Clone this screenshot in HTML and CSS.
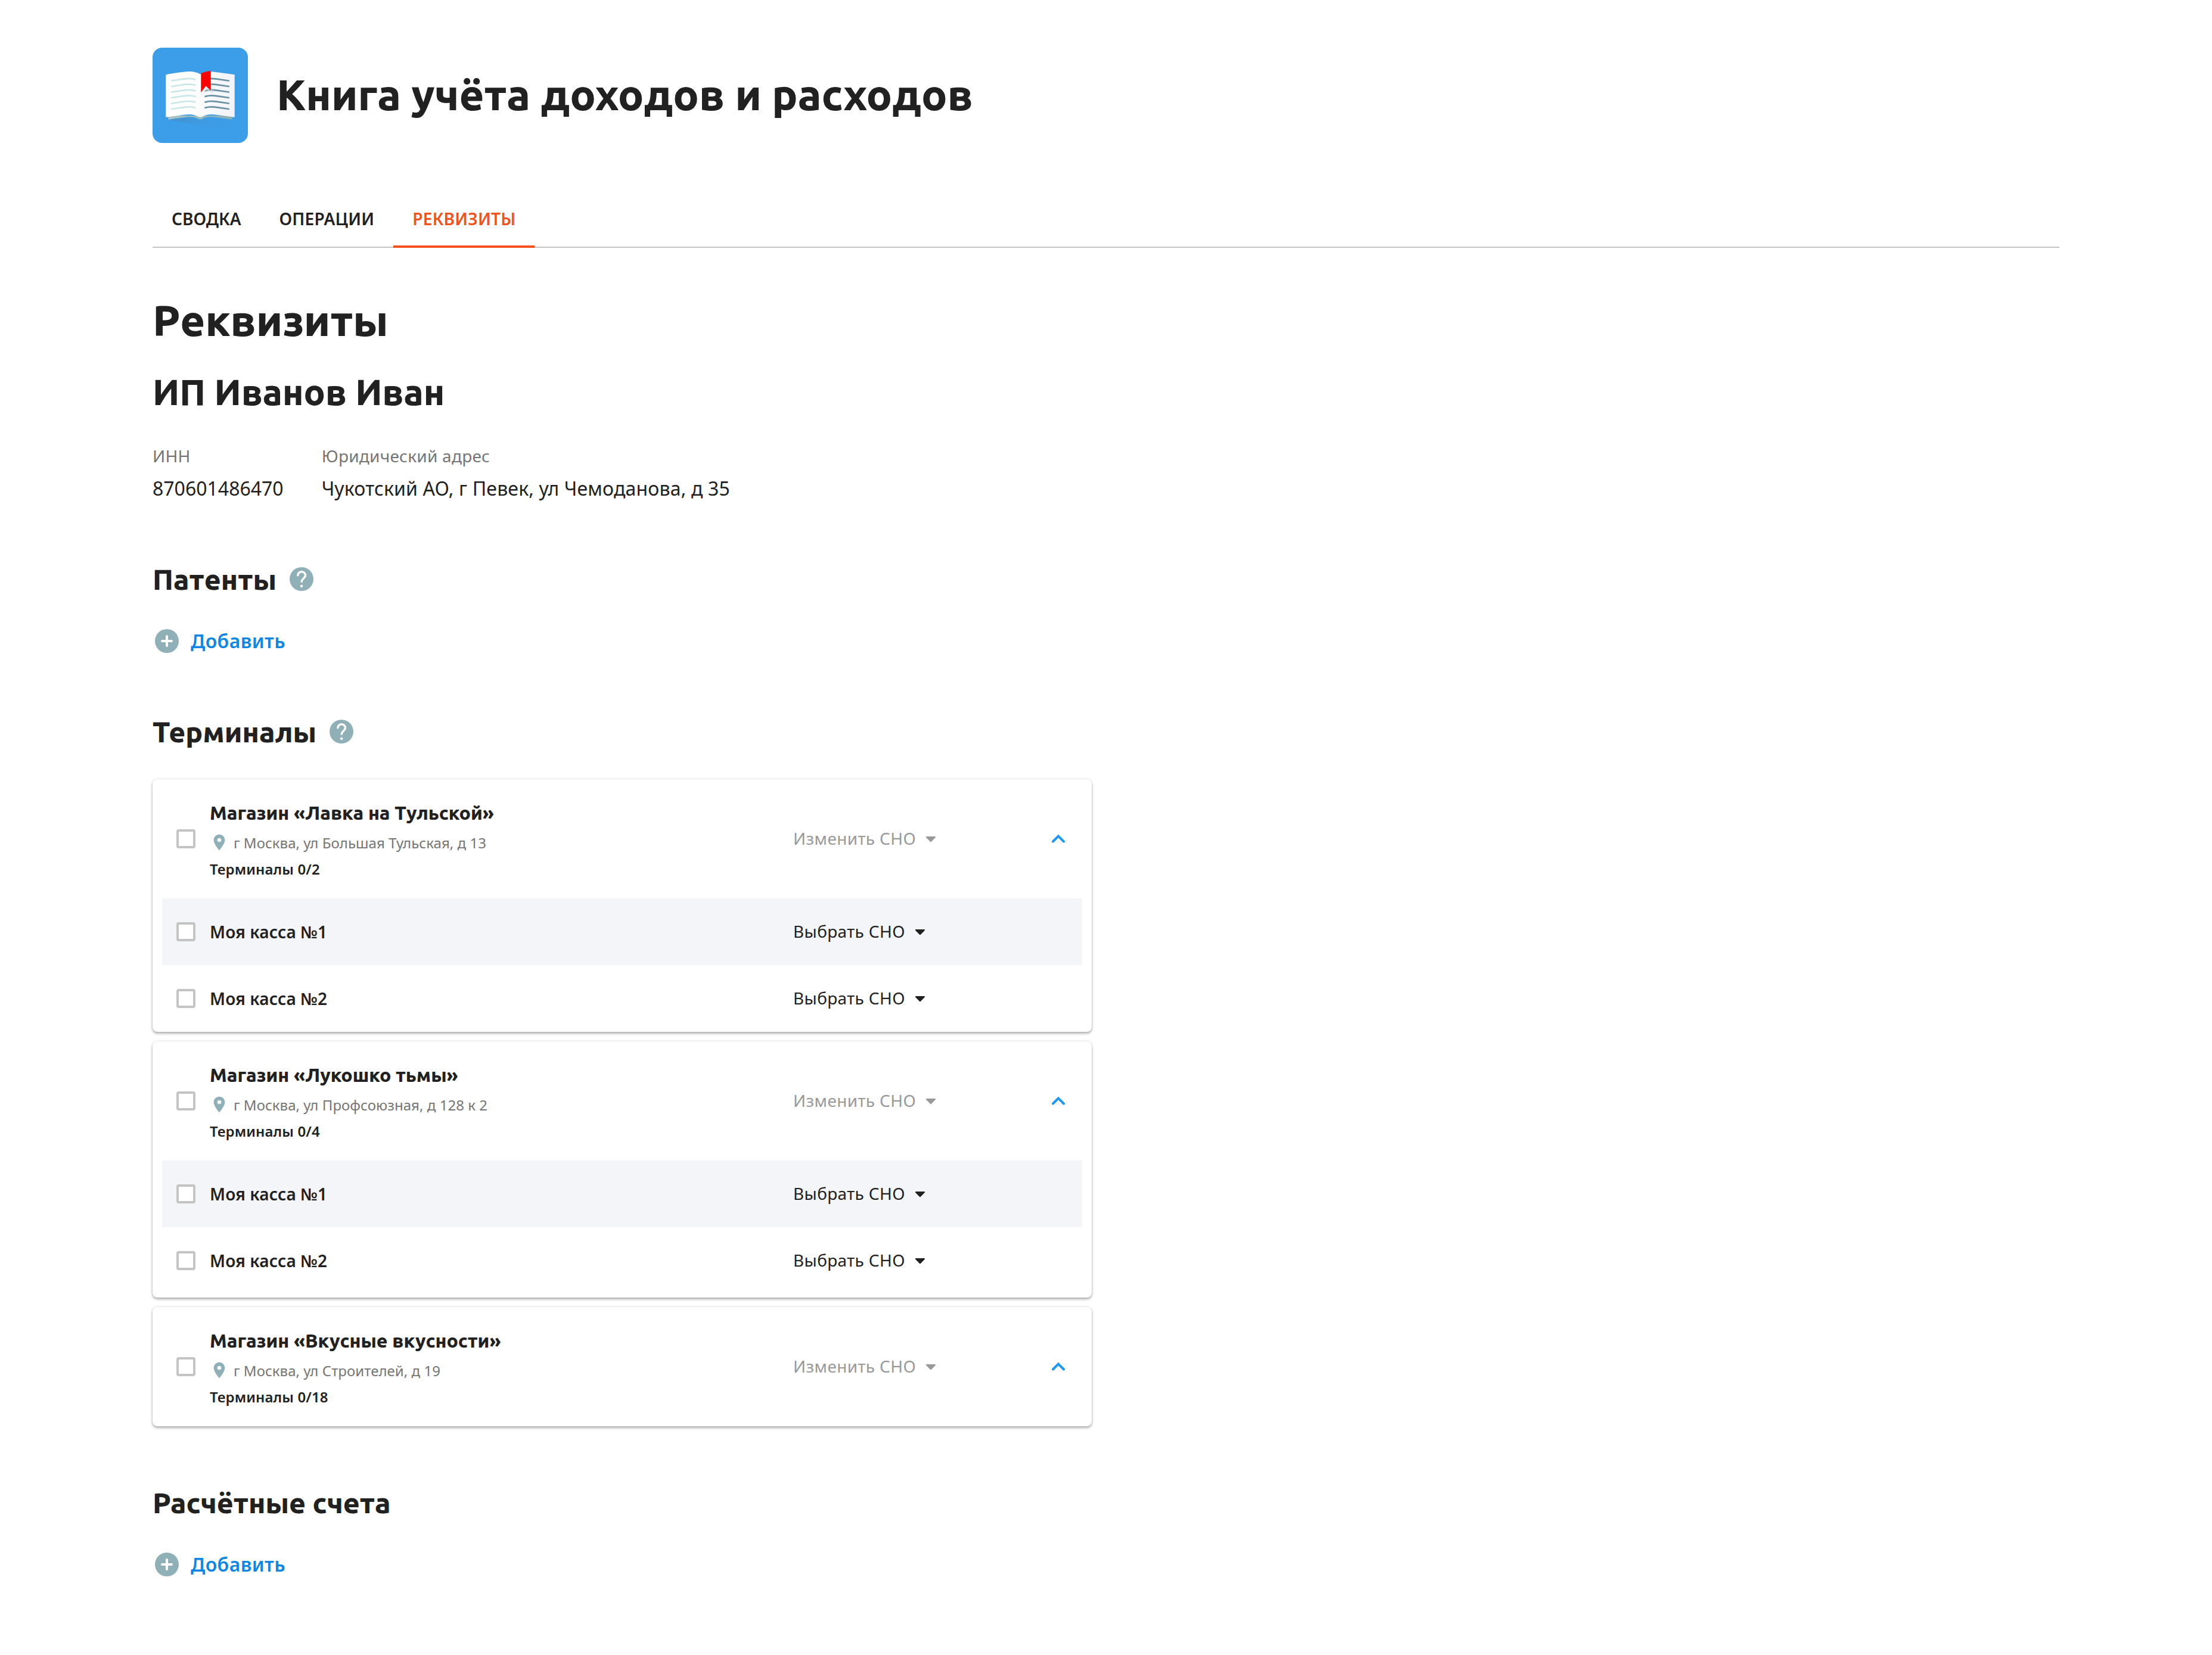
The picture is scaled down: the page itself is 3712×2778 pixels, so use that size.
FILE: index.html
```html
<!DOCTYPE html>
<html lang="ru">
<head>
<meta charset="utf-8">
<title>Книга учёта доходов и расходов</title>
<link rel="stylesheet" href="styles.css">
</head>
<body>
<svg class="sprite" aria-hidden="true">
  <symbol id="i-help" viewBox="0 0 40 40">
    <circle cx="20" cy="20" r="20" fill="#90b0b8"/>
    <path d="M13.9 13.8a6.3 6.1 0 0 1 12.6 0c0 4.6-6 5.4-6.3 10.4" fill="none" stroke="#fff" stroke-width="3.4" stroke-linecap="round"/>
    <circle cx="20.1" cy="31.8" r="2.2" fill="#fff"/>
  </symbol>
  <symbol id="i-plus" viewBox="0 0 40 40">
    <circle cx="20" cy="20" r="20" fill="#90b0b8"/>
    <path d="M20 12v16M12 20h16" fill="none" stroke="#fff" stroke-width="4" stroke-linecap="round"/>
  </symbol>
  <symbol id="i-pin" viewBox="0 0 24 24">
    <path d="M12 2C8.130 2 5 5.130 5 9c0 5.250 7 13 7 13s7-7.750 7-13c0-3.870-3.130-7-7-7zm0 9.500a2.500 2.500 0 1 1 0-5 2.500 2.500 0 0 1 0 5z" fill="#90b0b8"/>
  </symbol>
  <symbol id="i-caret" viewBox="0 0 16 10">
    <path d="M1.300 0h13.400c1.200 0 1.700 1.300.9 2.100L9 8.700c-.6.600-1.400.6-2 0L.4 2.100C-.4 1.300.1 0 1.300 0z" fill="currentColor"/>
  </symbol>
  <symbol id="i-up" viewBox="0 0 22 14">
    <path d="M2 11.500 11 2.500l9 9" fill="none" stroke="#1e98f5" stroke-width="4" stroke-linecap="round" stroke-linejoin="miter"/>
  </symbol>
</svg>

<div class="page">
  <header class="header">
    <svg class="logo" viewBox="0 0 160 160">
      <defs>
        <linearGradient id="page-l" x1="0" x2="1"><stop offset="0" stop-color="#fff"/><stop offset=".45" stop-color="#fcfcfd"/><stop offset="1" stop-color="#f1f3f6"/></linearGradient>
        <linearGradient id="drop" x1="0" x2="1"><stop offset="0" stop-color="#4590c9"/><stop offset="1" stop-color="#3c9de8" stop-opacity="0"/></linearGradient>
        <linearGradient id="edge" x1="0" x2="1"><stop offset="0" stop-color="#a9c5c4"/><stop offset="1" stop-color="#86afb6"/></linearGradient>
      </defs>
      <rect width="160" height="160" rx="16" fill="#3c9de8"/>
      <path d="M27 120.700 Q70 112 80 120 Q90 112 133 120 L128 137 L112 136z" fill="url(#drop)"/>
      <path d="M26.300 114V120.700L52 117.200Q68 114.500 76 119.500Q80 121.500 84 119.500Q92 114.500 108 117.200L133.700 120.700V114Z" fill="url(#edge)"/>
      <path d="M22.300 45.200Q42 42 54 40.600Q70 38.300 80 44.500Q90 38.300 106 40.900L137.700 45.200V116.700L106 112.500Q92 110.500 84 115.500Q80 117.500 76 115.500Q68 110.500 54 112.500L22.300 116.700Z" fill="url(#page-l)"/>
      <g fill="none" stroke-width="2.700" stroke-linecap="round">
        <g stroke="#cae7e8"><path id="ll" d="M32.200 55.500 54 52.400Q64 51 71.500 53.400"/><use href="#ll" y="9.500"/><use href="#ll" y="19"/><use href="#ll" y="28.500"/><use href="#ll" y="38"/><use href="#ll" y="47.500"/></g>
        <g stroke="#6b92a4"><path id="rl" d="M88.400 53.400Q96 51 106 52.400L127.800 55.500"/><use href="#rl" y="9.500"/><use href="#rl" y="19"/><use href="#rl" y="28.500"/><use href="#rl" y="38"/><use href="#rl" y="47.500"/></g>
      </g>
      <path d="M97.700 56 101.800 77.500 91.500 71 84 79 90 66z" fill="#cfd8df" fill-opacity=".6"/>
      <path d="M81.300 43.300Q88 40 97.700 39V72L89.500 64.300 81.300 75.300Z" fill="#f00"/>
    </svg>
    <h1 class="title">Книга учёта доходов и расходов</h1>
  </header>

  <nav class="tabs">
    <a class="tab tab-summary">СВОДКА</a>
    <a class="tab">ОПЕРАЦИИ</a>
    <a class="tab tab-active">РЕКВИЗИТЫ</a>
  </nav>

  <main>
    <h2 class="heading">Реквизиты</h2>
    <h3 class="company">ИП Иванов Иван</h3>
    <dl class="facts">
      <div><dt>ИНН</dt><dd class="digits">870601486470</dd></div>
      <div><dt>Юридический адрес</dt><dd>Чукотский АО, г Певек, ул Чемоданова, д 35</dd></div>
    </dl>

    <section class="section">
      <h4 class="section-title">Патенты <svg class="icon"><use href="#i-help"/></svg></h4>
      <a class="add"><svg class="icon"><use href="#i-plus"/></svg><span>Добавить</span></a>
    </section>

    <section class="section">
      <h4 class="section-title">Терминалы <svg class="icon"><use href="#i-help"/></svg></h4>
      <div class="cards">
        <article class="card">
          <div class="shop">
            <span class="check"></span>
            <div class="shop-info">
              <h5>Магазин «Лавка на Тульской»</h5>
              <p class="address"><svg class="pin"><use href="#i-pin"/></svg>г Москва, ул Большая Тульская, д 13</p>
              <p class="count">Терминалы 0/2</p>
            </div>
            <span class="menu menu-off">Изменить СНО<svg class="caret"><use href="#i-caret"/></svg></span>
            <svg class="up"><use href="#i-up"/></svg>
          </div>
          <div class="kassa"><span class="check"></span><b>Моя касса №1</b><span class="menu">Выбрать СНО<svg class="caret"><use href="#i-caret"/></svg></span></div>
          <div class="kassa"><span class="check"></span><b>Моя касса №2</b><span class="menu">Выбрать СНО<svg class="caret"><use href="#i-caret"/></svg></span></div>
        </article>
        <article class="card card-padded">
          <div class="shop">
            <span class="check"></span>
            <div class="shop-info">
              <h5>Магазин «Лукошко тьмы»</h5>
              <p class="address"><svg class="pin"><use href="#i-pin"/></svg>г Москва, ул Профсоюзная, д 128 к 2</p>
              <p class="count">Терминалы 0/4</p>
            </div>
            <span class="menu menu-off">Изменить СНО<svg class="caret"><use href="#i-caret"/></svg></span>
            <svg class="up"><use href="#i-up"/></svg>
          </div>
          <div class="kassa"><span class="check"></span><b>Моя касса №1</b><span class="menu">Выбрать СНО<svg class="caret"><use href="#i-caret"/></svg></span></div>
          <div class="kassa"><span class="check"></span><b>Моя касса №2</b><span class="menu">Выбрать СНО<svg class="caret"><use href="#i-caret"/></svg></span></div>
        </article>
        <article class="card">
          <div class="shop">
            <span class="check"></span>
            <div class="shop-info">
              <h5>Магазин «Вкусные вкусности»</h5>
              <p class="address"><svg class="pin"><use href="#i-pin"/></svg>г Москва, ул Строителей, д 19</p>
              <p class="count">Терминалы 0/18</p>
            </div>
            <span class="menu menu-off">Изменить СНО<svg class="caret"><use href="#i-caret"/></svg></span>
            <svg class="up"><use href="#i-up"/></svg>
          </div>
        </article>
      </div>
    </section>

    <section class="section">
      <h4 class="section-title">Расчётные счета</h4>
      <a class="add"><svg class="icon"><use href="#i-plus"/></svg><span>Добавить</span></a>
    </section>
  </main>
</div>
</body>
</html>
```

FILE: styles.css
```css
* { box-sizing: border-box; }

body {
  margin: 0;
  background: #fff;
  color: #212121;
  font-family: "Noto Sans", "Open Sans", sans-serif;
}

h1, h2, h3, h4, h5, p, dl, dd { margin: 0; font-weight: inherit; }

h1, h2, h3, h4, h5 {
  font-family: Ubuntu, "Noto Sans", sans-serif;
  font-weight: 800;
}

.sprite { display: none; }

.page {
  width: 3712px;
  min-height: 2778px;
  padding: 80px 256px 0;
}

.header { display: flex; align-items: center; gap: 48px; }
.logo { width: 160px; height: 160px; }
.title {
  padding-bottom: 2px;
  font-size: 72px;
  line-height: 96px;
}

.tabs {
  display: flex;
  height: 96px;
  margin-top: 80px;
  border-bottom: 2px solid #c4c4c4;
}
.tab {
  height: 96px;
  padding: 0 32px;
  border-bottom: 4px solid transparent;
  font-size: 28px;
  font-weight: 600;
  line-height: 94px;
  letter-spacing: 0.25px;
}
.tab-summary { letter-spacing: 0; }
.tab-active { border-color: #f4511e; color: #f4511e; }

.heading {
  margin-top: 78px;
  font-size: 72px;
  line-height: 88px;
}
.company {
  margin-top: 40px;
  font-size: 60px;
  line-height: 72px;
}

.facts { display: flex; gap: 64px; margin: 51px 0 96px; }
.facts dt {
  color: #757575;
  font-size: 28px;
  line-height: 40px;
  letter-spacing: 0.25px;
}
.facts dd {
  margin-top: 11px;
  font-size: 32px;
  line-height: 48px;
  letter-spacing: 0.17px;
}
.facts .digits { letter-spacing: 0; }

.section + .section { margin-top: 96px; }
.section-title {
  display: flex;
  align-items: center;
  gap: 21.5px;
  font-size: 48px;
  line-height: 64px;
}
.icon { width: 40px; height: 40px; }

.add {
  display: flex;
  align-items: center;
  gap: 20px;
  height: 48px;
  margin-top: 48px;
  padding-left: 4px;
  color: #0d87e4;
  font-size: 32px;
  font-weight: 600;
  letter-spacing: 0.4px;
}
.add span { padding-bottom: 2px; }

.cards { display: flex; flex-direction: column; gap: 16px; width: 1576px; margin-top: 48px; }
.card {
  border-radius: 8px;
  box-shadow: 0 0 4px rgba(0, 0, 0, 0.14), 0 3px 4px rgba(0, 0, 0, 0.28);
}
.card-padded { padding-bottom: 6px; }

.shop, .kassa {
  display: grid;
  grid-template-columns: 32px 955px 405px 32px;
  align-items: center;
  column-gap: 24px;
  margin: 0 16px;
  padding-left: 24px;
}
.shop { height: 200px; }
.kassa { height: 112px; font-size: 28px; }
.kassa b { padding-bottom: 1px; font-weight: 600; letter-spacing: 0.15px; }
.shop + .kassa { background: #f4f5f8; }

.check {
  width: 32px;
  height: 32px;
  border: 4px solid #c4c4c4;
  border-radius: 4px;
  background: #fff;
}

.shop-info { align-self: start; padding-top: 36px; }
.shop-info h5 {
  font-size: 32px;
  line-height: 40px;
}
.address {
  display: flex;
  gap: 8px;
  margin-top: 15px;
  color: #757575;
  font-size: 24px;
  line-height: 32px;
  letter-spacing: 0.04px;
}
.pin { width: 32px; height: 32px; margin-top: -1px; }
.count {
  margin-top: 12px;
  font-size: 24px;
  font-weight: 600;
  line-height: 32px;
  letter-spacing: 0.1px;
}

.menu {
  display: flex;
  align-items: center;
  gap: 17px;
  padding-bottom: 2px;
  font-size: 28px;
  line-height: 40px;
  letter-spacing: 0.35px;
}
.menu-off { color: #999; }
.caret { width: 16px; height: 10px; margin-top: 3px; }
.up { width: 22px; height: 14px; margin-bottom: 1px; justify-self: center; }
```
